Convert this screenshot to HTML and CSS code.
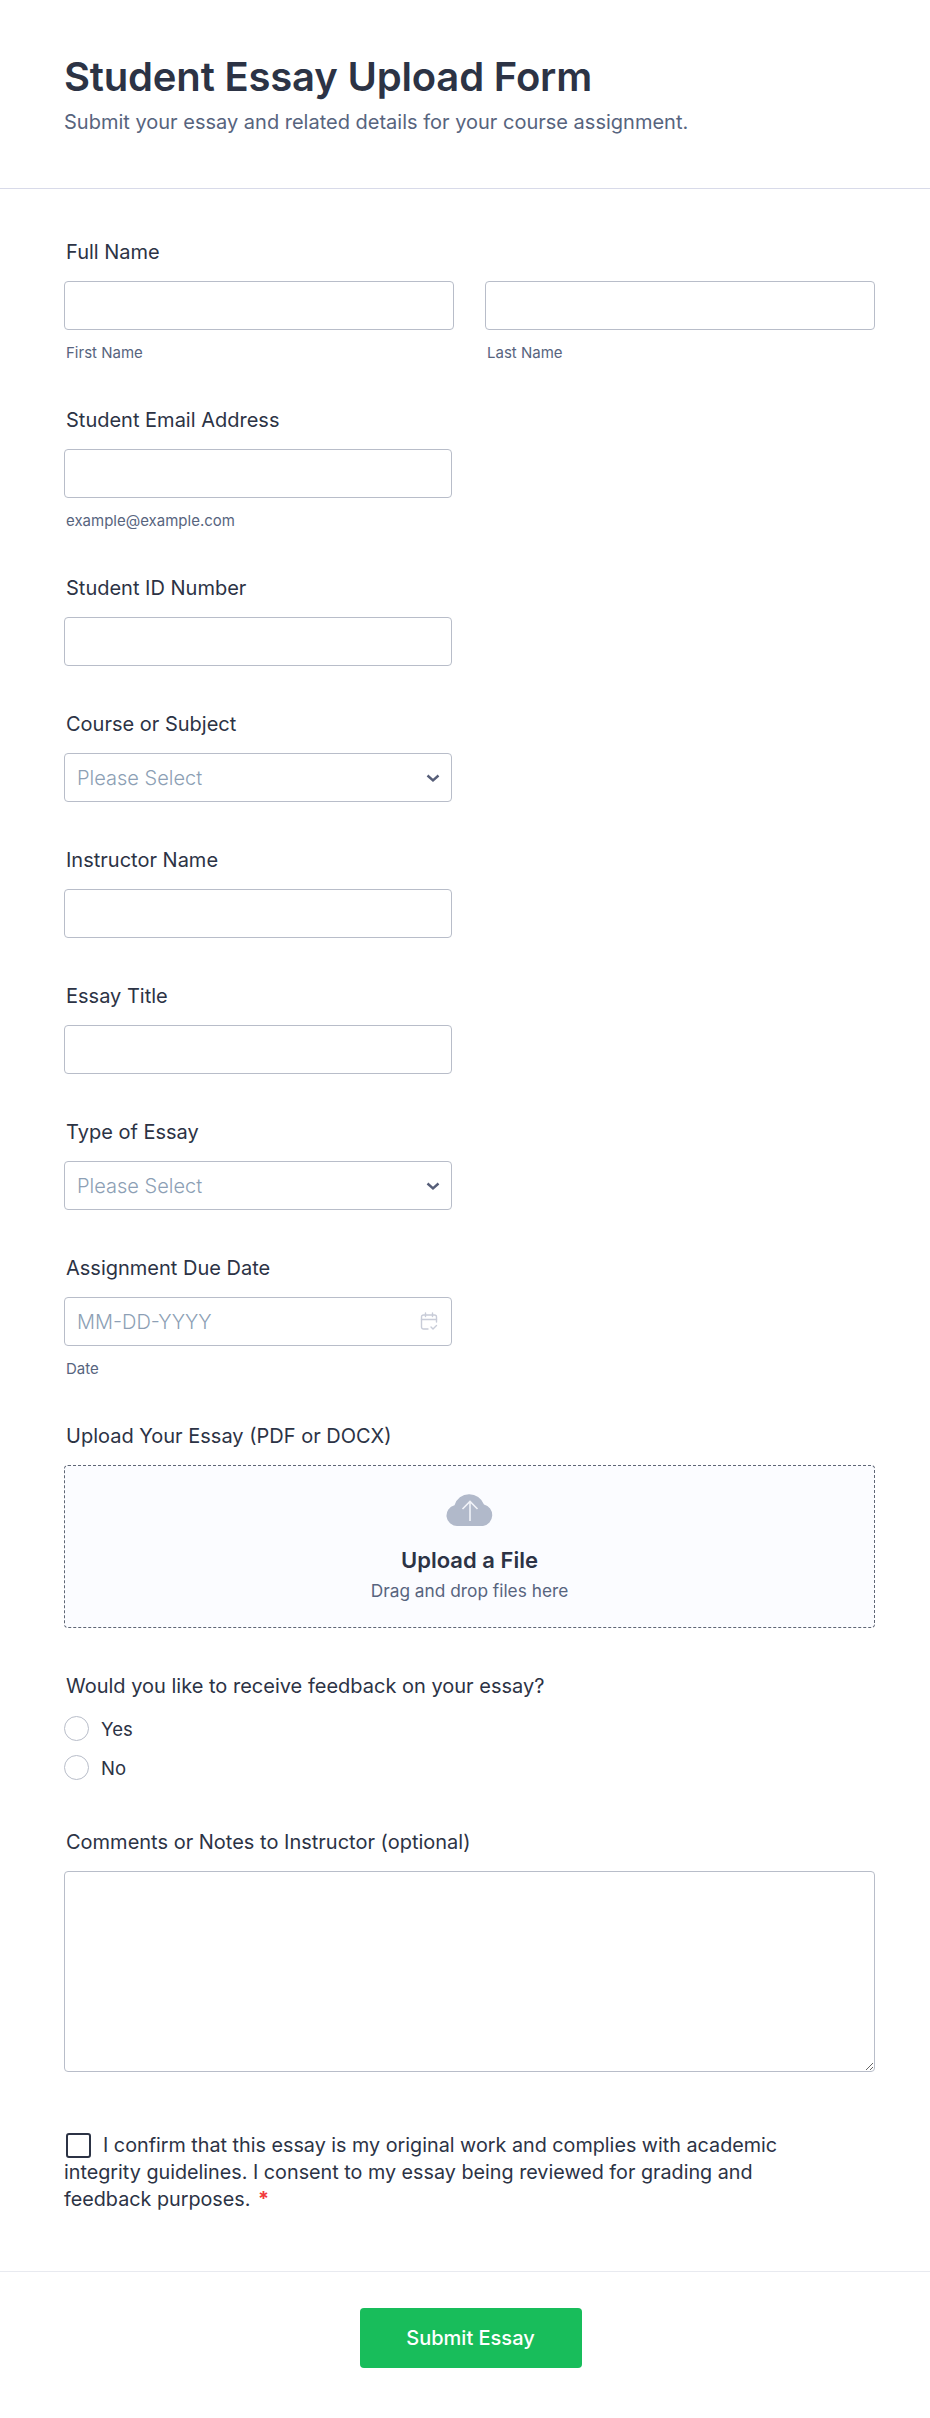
FILE: index.html
```html
<!DOCTYPE html>
<html lang="en">
<head>
    <meta charset="UTF-8" />
    <meta name="viewport" content="width=device-width, initial-scale=1.0" />
    <title>Student Essay Upload Form</title>
    <link rel="stylesheet" href="styles.css">
</head>
<body>
<div class="header">
    <h1>Student Essay Upload Form</h1>
    <p>Submit your essay and related details for your course assignment.</p>
</div>
<form class="form">
    <div class="field">
        <label class="label">Full Name</label>
        <div class="name-row">
            <div class="name-col">
                <input class="input wide" type="text">
                <span class="sublabel">First Name</span>
            </div>
            <div class="name-col">
                <input class="input wide" type="text">
                <span class="sublabel">Last Name</span>
            </div>
        </div>
    </div>
    <div class="field">
        <label class="label">Student Email Address</label>
        <input class="input" type="text">
        <span class="sublabel">example@example.com</span>
    </div>
    <div class="field">
        <label class="label">Student ID Number</label>
        <input class="input" type="text">
    </div>
    <div class="field">
        <label class="label">Course or Subject</label>
        <div class="control">
            <select class="input select"><option>Please Select</option></select>
            <svg class="chevron" viewBox="0 0 14 10" width="14" height="10"><path d="M1.500 2.500 7 7.500 12.500 2.500" fill="none" stroke="#565e78" stroke-width="2.4"/></svg>
        </div>
    </div>
    <div class="field">
        <label class="label">Instructor Name</label>
        <input class="input" type="text">
    </div>
    <div class="field">
        <label class="label">Essay Title</label>
        <input class="input" type="text">
    </div>
    <div class="field">
        <label class="label">Type of Essay</label>
        <div class="control">
            <select class="input select"><option>Please Select</option></select>
            <svg class="chevron" viewBox="0 0 14 10" width="14" height="10"><path d="M1.500 2.500 7 7.500 12.500 2.500" fill="none" stroke="#565e78" stroke-width="2.4"/></svg>
        </div>
    </div>
    <div class="field">
        <label class="label">Assignment Due Date</label>
        <div class="control">
            <input class="input" type="text" placeholder="MM-DD-YYYY">
            <svg class="calendar" viewBox="0 0 18 19" width="18" height="19" fill="none" stroke="#c8ccd8" stroke-width="1.4" stroke-linecap="round" stroke-linejoin="round">
                <path d="M8 17H3.5A2 2 0 0 1 1.500 15V5A2 2 0 0 1 3.500 3H14.500A2 2 0 0 1 16.500 5V10"/>
                <path d="M1.500 7.500H16.500M5.500 1V4.500M12.500 1V4.500"/>
                <path d="M11 15 13 17 16.500 13.500"/>
            </svg>
        </div>
        <span class="sublabel">Date</span>
    </div>
    <div class="field">
        <label class="label">Upload Your Essay (PDF or DOCX)</label>
        <div class="upload">
            <svg class="cloud" viewBox="0 0 48 33" width="48" height="33">
                <path d="M11 33A10.500 10.500 0 0 1 8.500 12.300 15.500 15.500 0 0 1 38 11.500 11 11 0 0 1 37 33Z" fill="#b1b9ca"/>
                <path d="M24 28V9M16.500 16 24 8.500 31.500 16" fill="none" stroke="#f1f3f8" stroke-width="1.600"/>
            </svg>
            <div class="upload-title">Upload a File</div>
            <div class="upload-hint">Drag and drop files here</div>
        </div>
    </div>
    <div class="field field-radios">
        <label class="label label-tight">Would you like to receive feedback on your essay?</label>
        <div class="radio"><span class="circle"></span>Yes</div>
        <div class="radio"><span class="circle"></span>No</div>
    </div>
    <div class="field">
        <label class="label">Comments or Notes to Instructor (optional)</label>
        <textarea class="input wide notes"></textarea>
    </div>
    <div class="field consent">
        <span class="checkbox"></span><span>I confirm that this essay is my original work and complies with academic integrity guidelines. I consent to my essay being reviewed for grading and</span> <span>feedback purposes.</span> <span class="required">*</span>
    </div>
</form>
<div class="footer">
    <button class="submit" type="button">Submit Essay</button>
</div>
</body>
</html>
```

FILE: styles.css
```css
* {
  box-sizing: border-box;
}
body {
  margin: 0;
  background: #fff;
  font-family: Inter, Arial, sans-serif;
  color: #2c3345;
}
.header {
  height: 189px;
  padding: 52px 64px 0;
  border-bottom: 1px solid #d8dae9;
}
.header h1 {
  margin: 0;
  font-size: 40px;
  line-height: 50px;
  font-weight: 600;
  letter-spacing: -0.18px;
}
.header p {
  margin: 7px 0 0;
  font-size: 20px;
  line-height: 27px;
  color: #57647e;
}
.form {
  padding: 49px 55px 0 64px;
}
.field {
  margin-bottom: 44px;
}
.field-radios {
  margin-bottom: 41px;
}
.label {
  display: block;
  margin: 0 0 15px 2px;
  padding-top: 1px;
  font-size: 20px;
  line-height: 27px;
  font-weight: 400;
  color: #2c3345;
}
.label-tight {
  margin-bottom: 9px;
}
.name-row {
  display: flex;
  gap: 31px;
}
.name-col {
  width: 390px;
}
.input {
  display: block;
  width: 388px;
  height: 49px;
  padding: 0 12px;
  border: 1px solid #b8bdc9;
  border-radius: 4px;
  background: #fff;
  font-family: Inter, Arial, sans-serif;
  font-size: 20px;
  font-weight: 300;
  color: #8d9fb5;
}
.input::placeholder {
  color: #8d9fb5;
  opacity: 1;
}
.wide {
  width: 100%;
}
.select {
  appearance: none;
}
.control {
  position: relative;
  width: 388px;
}
.chevron {
  position: absolute;
  right: 12px;
  top: 20px;
}
.calendar {
  position: absolute;
  right: 14px;
  top: 15px;
}
.sublabel {
  display: block;
  margin: 13px 0 0 2px;
  font-size: 15px;
  line-height: 19px;
  color: #57647e;
}
.upload {
  display: flex;
  flex-direction: column;
  align-items: center;
  height: 163px;
  padding-top: 27px;
  border: 1px dashed #5f6675;
  border-radius: 4px;
  background: #fbfcff;
}
.upload-title {
  margin-top: 20px;
  font-size: 22px;
  line-height: 28px;
  font-weight: 600;
}
.upload-hint {
  margin-top: 5px;
  font-size: 17.3px;
  line-height: 24px;
  color: #57647e;
}
.radio {
  display: flex;
  align-items: center;
  gap: 12px;
  height: 39px;
  font-size: 18.5px;
}
.circle {
  width: 25px;
  height: 25px;
  border: 1px solid #b8bdc9;
  border-radius: 50%;
}
.notes {
  height: 201px;
}
.consent {
  width: 760px;
  margin-top: 60px;
  margin-bottom: 58px;
  font-size: 19.75px;
  line-height: 27px;
}
.checkbox {
  display: inline-block;
  width: 25px;
  height: 25px;
  margin: 0 12px 0 2px;
  vertical-align: -6px;
  border: 2px solid #2c3345;
  border-radius: 3px;
}
.required {
  margin-left: 2px;
  color: #f23a3c;
  font-weight: 700;
}
.footer {
  display: flex;
  justify-content: center;
  padding: 36px 0 50px 11px;
  border-top: 1px solid #e8eaf0;
}
.submit {
  width: 222px;
  height: 60px;
  border: none;
  border-radius: 4px;
  background: #18bd5b;
  color: #fff;
  font-family: Inter, Arial, sans-serif;
  font-size: 20px;
  font-weight: 500;
}
```
